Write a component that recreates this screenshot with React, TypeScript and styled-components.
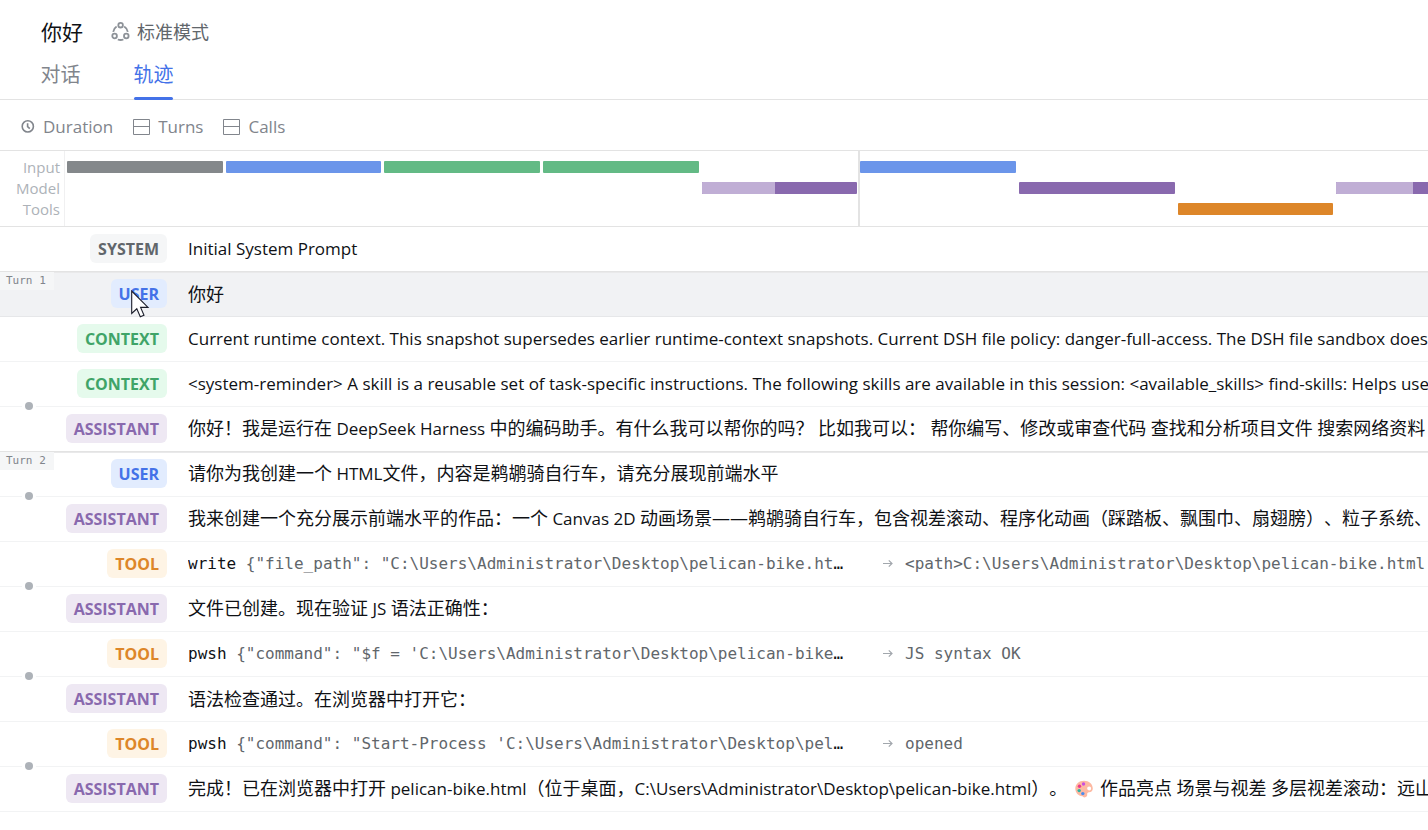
import React from "react";
import styled, { createGlobalStyle } from "styled-components";

const sans = `"Open Sans", "Noto Sans CJK SC", sans-serif`;
const mono = `"DejaVu Sans Mono", "Liberation Mono", monospace`;

type Role = "SYSTEM" | "USER" | "CONTEXT" | "ASSISTANT" | "TOOL";

const roleColors: Record<Role, { bg: string; fg: string }> = {
  SYSTEM: { bg: "#f5f6f7", fg: "#61666b" },
  USER: { bg: "#e2ecfe", fg: "#4472e8" },
  CONTEXT: { bg: "#e5faec", fg: "#3fa468" },
  ASSISTANT: { bg: "#eee8f3", fg: "#8969ae" },
  TOOL: { bg: "#fef4e5", fg: "#dd8629" },
};

const GlobalStyle = createGlobalStyle`
  * { box-sizing: border-box; }
  body {
    margin: 0;
    background: #fff;
    color: #0f1115;
    font-family: ${sans};
    text-spacing-trim: space-all;
    overflow-x: hidden;
  }
  button { font: inherit; border: 0; background: none; padding: 0; margin: 0; }
`;

const Header = styled.header`
  display: flex;
  flex-direction: column;
  height: 100px;
  padding: 16px 41px 0;
  border-bottom: 1px solid #e3e3e3;
`;

const TitleRow = styled.div`
  display: flex;
  align-items: center;
  gap: 28px;
  height: 32px;
`;

const Title = styled.h1`
  margin: 0;
  font-size: 21px;
  line-height: 32px;
  font-weight: 400;
`;

const Mode = styled.button`
  display: flex;
  align-items: center;
  gap: 6px;
  color: #61666b;
  font-size: 18px;
  line-height: 32px;

  svg { color: #8d9298; }
`;

const Tabs = styled.nav`
  display: flex;
  gap: 54px;
  flex: 1;
  margin-bottom: -1px;
`;

const Tab = styled.button<{ $active?: boolean }>`
  position: relative;
  width: 39px;
  display: flex;
  justify-content: center;
  white-space: nowrap;
  padding-top: 11px;
  font-size: 20px;
  line-height: 32px;
  color: ${(p) => (p.$active ? "#4472e8" : "#81858c")};

  &::after {
    content: "";
    position: absolute;
    left: 0;
    right: 0;
    bottom: 0;
    height: ${(p) => (p.$active ? "3px" : "0")};
    border-radius: 2px;
    background: #4472e8;
  }
`;

const Toolbar = styled.div`
  display: flex;
  align-items: center;
  height: 51px;
  padding: 4px 20px 0;
  gap: 20px;
  border-bottom: 1px solid #e3e3e3;
`;

const ToolButton = styled.button`
  display: flex;
  align-items: center;
  gap: 8px;
  font-size: 17px;
  line-height: 24px;
  color: #81858c;
`;

const Timeline = styled.section`
  display: grid;
  grid-template-columns: 65px minmax(0, 1fr);
  height: 76px;
  border-bottom: 1px solid #e3e3e3;
`;

const LaneLabels = styled.div`
  padding: 6px 4px 0 0;
  border-right: 1px solid #f0f0f1;
  text-align: right;
  font-size: 15px;
  line-height: 21px;
  color: #adb2b8;
`;

const TrackView = styled.div`
  overflow: hidden;
  padding-left: 2px;
`;

const Track = styled.div`
  display: grid;
  width: 100vw;
  height: 75px;
  grid-template-columns: repeat(9, minmax(0, 1fr));
  grid-template-rows: 10px 12px 9px 12px 9px 12px 11px;
`;

const Span = styled.div<{ $col: number; $lane: number; $color: string }>`
  grid-column: ${(p) => p.$col};
  grid-row: ${(p) => p.$lane * 2};
  margin-right: 3px;
  border-radius: 1px;
  overflow: hidden;
  background: ${(p) => p.$color};
`;

const Waiting = styled.div`
  height: 100%;
  background: #c0aed5;
`;

const TurnDivider = styled.div`
  grid-column: 6;
  grid-row: 1 / -1;
  width: 2px;
  margin-left: -2px;
  background: #e3e3e3;
`;

const List = styled.ol`
  list-style: none;
  margin: 0;
  padding: 0;
`;

const Row = styled.li<{ $hover?: boolean; $turn?: boolean }>`
  position: relative;
  z-index: ${(p) => (p.$hover ? 1 : "auto")};
  display: grid;
  grid-template-columns: 167px minmax(0, 1fr);
  column-gap: 21px;
  align-items: center;
  height: 45px;
  padding-bottom: 1px;
  border-bottom: 1px solid ${(p) => (p.$hover ? "#e6e7e9" : "#f2f3f4")};
  background: ${(p) => (p.$hover ? "#f1f2f4" : "#fff")};
  box-shadow: ${(p) => (p.$turn ? "0 -1px 0 #e3e3e3, inset 0 1px 0 #e9e9ea" : "none")};
`;

const Badge = styled.span<{ $role: Role }>`
  position: relative;
  justify-self: end;
  padding: 2px 8px 0;
  border-radius: 6px;
  font-size: 16px;
  line-height: 27px;
  font-weight: 700;
  background: ${(p) => roleColors[p.$role].bg};
  color: ${(p) => roleColors[p.$role].fg};
`;

const TurnLabel = styled.span`
  position: absolute;
  top: 0;
  left: 0;
  width: 54px;
  padding-left: 6px;
  font-family: ${mono};
  font-size: 11px;
  line-height: 18px;
  color: #81858c;
  background: #f5f6f7;
`;

const Dot = styled.span`
  position: absolute;
  top: -5px;
  left: 22px;
  width: 14px;
  height: 8px;
  background: #fff;

  &::before {
    content: "";
    display: block;
    width: 8px;
    height: 8px;
    margin: 0 auto;
    border-radius: 50%;
    background: #adb2b8;
  }
`;

const Message = styled.p`
  margin: 0;
  overflow: hidden;
  white-space: pre;
  font-size: 18px;
  line-height: 28px;

  svg { vertical-align: -3px; margin: 0 3px; }
`;

const Latin = styled.span`
  font-size: 17px;
`;

const Call = styled.div`
  display: grid;
  grid-template-columns: 674px minmax(0, 1fr);
  column-gap: 21px;
  align-items: center;
  overflow: hidden;
  white-space: pre;
  font-family: ${mono};
  font-size: 16px;
  line-height: 28px;
`;

const Args = styled.span`
  color: #61666b;
`;

const Result = styled.span`
  display: flex;
  align-items: center;
  gap: 12px;
  color: #61666b;

  svg { flex: none; color: #a2a7ad; }
`;

const Pointer = styled.svg`
  position: absolute;
  left: 20px;
  top: 11px;
`;

const ModeIcon = () => (
  <svg width="20" height="20" viewBox="0 0 20 20" fill="none" stroke="currentColor" strokeWidth="1.8">
    <circle cx="9.6" cy="3.2" r="2.3" />
    <circle cx="3.6" cy="14" r="2.3" />
    <circle cx="15.3" cy="14" r="2.3" />
    <path d="M5.6 4.6A7.8 7.8 0 0 0 2.2 9.9M13.2 4.6A7.8 7.8 0 0 1 16.8 9.9M6.8 17.5A8 8 0 0 0 12.4 17.5" />
  </svg>
);

const ClockIcon = () => (
  <svg width="15" height="15" viewBox="0 0 15 15" fill="none" stroke="currentColor" strokeWidth="1.6">
    <circle cx="7.8" cy="6.4" r="5.6" />
    <path d="M7.6 3.2V6.6L9.8 8.6" />
  </svg>
);

const SplitIcon = () => (
  <svg width="17" height="16" viewBox="0 0 17 16" fill="none" stroke="currentColor">
    <path d="M.5 .5H16.5V15.5H.5ZM.5 7.5H16.5" />
  </svg>
);

const ArrowIcon = () => (
  <svg width="10" height="9" viewBox="0 0 10 9" fill="none" stroke="currentColor" strokeWidth="1.2">
    <path d="M0 4.5H9M5.8 1.3L9 4.5L5.8 7.7" />
  </svg>
);

const PaletteIcon = () => (
  <svg width="18" height="18" viewBox="0 0 18 18">
    <path
      d="M9 .8C4 .8 .3 4.2 .3 8.6C.3 13 3.5 16 7.2 16.2C8.2 16.3 8.3 17.4 9.6 17.4C11.2 17.4 12.5 16.4 12.2 14.6C12 13.2 12.6 12.4 14 12.3C16.4 12.2 17.8 10.9 17.8 8.6C17.8 4 14 .8 9 .8ZM14.2 6.4A2 2 0 1 1 14.1 10.4A2 2 0 0 1 14.2 6.4Z"
      fill="#fdb9a2"
      fillRule="evenodd"
    />
    <circle cx="8.5" cy="4" r="1.7" fill="#c94fe0" />
    <circle cx="4.5" cy="6.2" r="1.7" fill="#f0388a" />
    <circle cx="4.2" cy="10.6" r="1.7" fill="#2fb3a4" />
    <circle cx="7.8" cy="13.6" r="1.7" fill="#4a8df0" />
  </svg>
);

/* Latin runs are set one pixel smaller than the Chinese text around them. */
const Mixed = ({ text }: { text: string }) => (
  <>
    {text.split(/([\x20-\x7e]+|🎨)/).map((part, i) =>
      part === "🎨" ? (
        <PaletteIcon key={i} />
      ) : i % 2 ? (
        <Latin key={i}>{part}</Latin>
      ) : (
        part
      ),
    )}
  </>
);

type Entry = {
  role: Role;
  text?: string;
  tool?: string;
  args?: string;
  result?: string;
  turn?: number;
  step?: boolean;
  hover?: boolean;
};

const entries: Entry[] = [
  { role: "SYSTEM", text: "Initial System Prompt" },
  { role: "USER", text: "你好", turn: 1, hover: true },
  {
    role: "CONTEXT",
    text: "Current runtime context. This snapshot supersedes earlier runtime-context snapshots. Current DSH file policy: danger-full-access. The DSH file sandbox does",
  },
  {
    role: "CONTEXT",
    text: "<system-reminder> A skill is a reusable set of task-specific instructions. The following skills are available in this session: <available_skills> find-skills: Helps users",
  },
  {
    role: "ASSISTANT",
    step: true,
    text: "你好！我是运行在 DeepSeek Harness 中的编码助手。有什么我可以帮你的吗？ 比如我可以： 帮你编写、修改或审查代码 查找和分析项目文件 搜索网络资料",
  },
  { role: "USER", turn: 2, text: "请你为我创建一个 HTML文件，内容是鹈鹕骑自行车，请充分展现前端水平" },
  {
    role: "ASSISTANT",
    step: true,
    text: "我来创建一个充分展示前端水平的作品：一个 Canvas 2D 动画场景——鹈鹕骑自行车，包含视差滚动、程序化动画（踩踏板、飘围巾、扇翅膀）、粒子系统、",
  },
  {
    role: "TOOL",
    tool: "write",
    args: '{"file_path": "C:\\Users\\Administrator\\Desktop\\pelican-bike.ht',
    result: "<path>C:\\Users\\Administrator\\Desktop\\pelican-bike.html",
  },
  { role: "ASSISTANT", step: true, text: "文件已创建。现在验证 JS 语法正确性：" },
  {
    role: "TOOL",
    tool: "pwsh",
    args: '{"command": "$f = \'C:\\Users\\Administrator\\Desktop\\pelican-bike',
    result: "JS syntax OK",
  },
  { role: "ASSISTANT", step: true, text: "语法检查通过。在浏览器中打开它：" },
  {
    role: "TOOL",
    tool: "pwsh",
    args: '{"command": "Start-Process \'C:\\Users\\Administrator\\Desktop\\pel',
    result: "opened",
  },
  {
    role: "ASSISTANT",
    step: true,
    text: "完成！已在浏览器中打开 pelican-bike.html（位于桌面，C:\\Users\\Administrator\\Desktop\\pelican-bike.html）。 🎨 作品亮点 场景与视差 多层视差滚动：远山",
  },
];

const spans = [
  { lane: 1, color: "#84888b" },
  { lane: 1, color: "#6b95ea" },
  { lane: 1, color: "#63ba85" },
  { lane: 1, color: "#63ba85" },
  { lane: 2, color: "#8969ae", wait: 47 },
  { lane: 1, color: "#6b95ea" },
  { lane: 2, color: "#8969ae" },
  { lane: 3, color: "#dd8629" },
  { lane: 2, color: "#8969ae", wait: 49 },
];

export default function App() {
  return (
    <>
      <GlobalStyle />
      <Header>
        <TitleRow>
          <Title>你好</Title>
          <Mode type="button">
            <ModeIcon />
            标准模式
          </Mode>
        </TitleRow>
        <Tabs>
          <Tab type="button">对话</Tab>
          <Tab type="button" $active>
            轨迹
          </Tab>
        </Tabs>
      </Header>
      <Toolbar>
        <ToolButton type="button">
          <ClockIcon />
          Duration
        </ToolButton>
        <ToolButton type="button">
          <SplitIcon />
          Turns
        </ToolButton>
        <ToolButton type="button">
          <SplitIcon />
          Calls
        </ToolButton>
      </Toolbar>
      <Timeline>
        <LaneLabels>
          <div>Input</div>
          <div>Model</div>
          <div>Tools</div>
        </LaneLabels>
        <TrackView>
          <Track>
            <TurnDivider />
            {spans.map((s, i) => (
              <Span key={i} $col={i + 1} $lane={s.lane} $color={s.color}>
                {s.wait && <Waiting style={{ width: `${s.wait}%` }} />}
              </Span>
            ))}
          </Track>
        </TrackView>
      </Timeline>
      <List>
        {entries.map((e, i) => (
          <Row key={i} $hover={e.hover} $turn={!!e.turn}>
            {e.turn && <TurnLabel>Turn {e.turn}</TurnLabel>}
            {e.step && <Dot />}
            <Badge $role={e.role}>
              {e.role}
              {e.hover && (
                <Pointer width="19" height="29" viewBox="0 0 19 29">
                  <path
                    d="M.7 1V23.5L5.8 18.8L9.3 26.8L13 25.2L9.6 17.4H17Z"
                    fill="#fff"
                    stroke="#1b1d2a"
                    strokeWidth="1.1"
                  />
                </Pointer>
              )}
            </Badge>
            {e.tool ? (
              <Call>
                <span>
                  {e.tool} <Args>{e.args}</Args>…
                </span>
                <Result>
                  <ArrowIcon />
                  {e.result}
                </Result>
              </Call>
            ) : (
              <Message>
                <Mixed text={e.text ?? ""} />
              </Message>
            )}
          </Row>
        ))}
      </List>
    </>
  );
}
